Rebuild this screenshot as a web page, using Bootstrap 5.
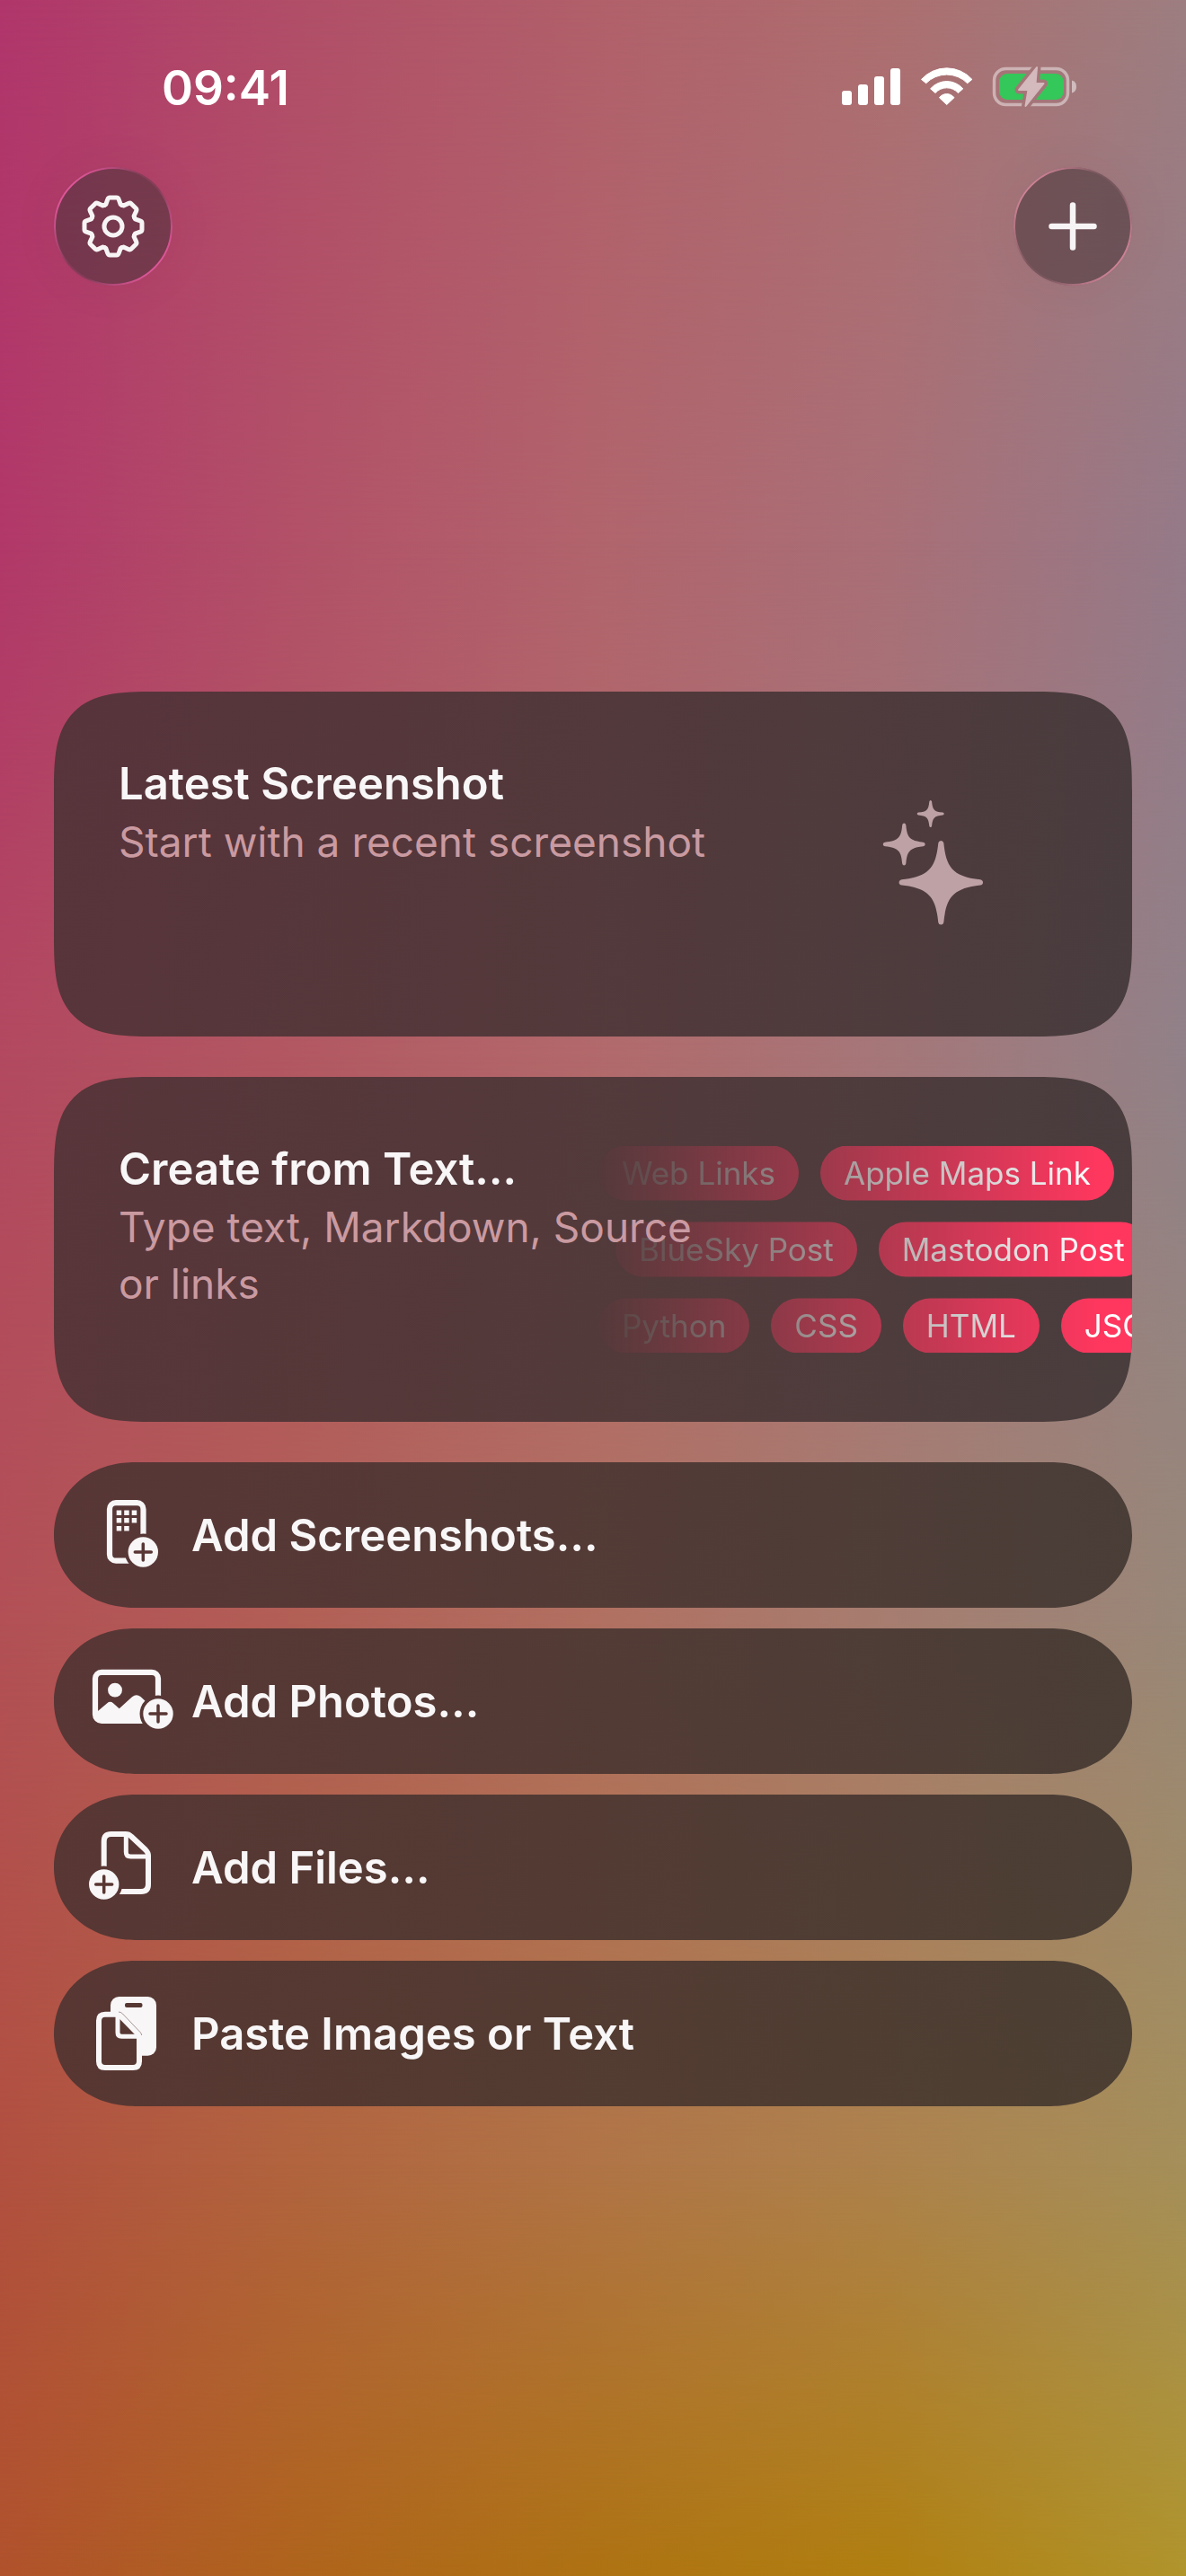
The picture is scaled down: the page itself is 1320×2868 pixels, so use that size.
<!DOCTYPE html>
<html lang="en">
<head>
<meta charset="utf-8">
<meta name="viewport" content="width=device-width, initial-scale=1">
<title>New Project</title>
<link href="https://cdn.jsdelivr.net/npm/bootstrap@5.3.0/dist/css/bootstrap.min.css" rel="stylesheet">
<style>
  body { font-family: Inter, "Liberation Sans", sans-serif; background: #b0606a; color: #f8f6f7; }
  .screen { min-height: 100vh; isolation: isolate; }

  /* Mesh backdrop: one horizontal gradient per band, each fading in over the last */
  .mesh { z-index: -1; }
  .mesh i { position: absolute; inset: 0; background: linear-gradient(90deg, var(--a), var(--b) 25%, var(--c) 50%, var(--d) 75%, var(--e)); }
  .mesh i:nth-child(1) { --a:#b0366b; --b:#b14e68; --c:#b1606a; --d:#ad6f70; --e:#9d7e80; }
  .mesh i:nth-child(2) { --a:#b13869; --b:#b25168; --c:#b1646c; --d:#a96f77; --e:#957a88; -webkit-mask: linear-gradient(transparent 0%, #000 21%); mask: linear-gradient(transparent 0%, #000 21%); }
  .mesh i:nth-child(3) { --a:#b24960; --b:#b25862; --c:#b2696b; --d:#a57779; --e:#918188; -webkit-mask: linear-gradient(transparent 21%, #000 41%); mask: linear-gradient(transparent 21%, #000 41%); }
  .mesh i:nth-child(4) { --a:#b25056; --b:#b25f56; --c:#b17061; --d:#a67d70; --e:#998778; -webkit-mask: linear-gradient(transparent 41%, #000 63%); mask: linear-gradient(transparent 41%, #000 63%); }
  .mesh i:nth-child(5) { --a:#b15040; --b:#b1643e; --c:#b07446; --d:#ad824c; --e:#a58f5a; -webkit-mask: linear-gradient(transparent 63%, #000 84%); mask: linear-gradient(transparent 63%, #000 84%); }
  .mesh i:nth-child(6) { --a:#b0522c; --b:#af641c; --c:#ae7212; --d:#b07f10; --e:#b0942c; -webkit-mask: linear-gradient(transparent 84%, #000 100%); mask: linear-gradient(transparent 84%, #000 100%); }

  .statusbar { padding: 75px 122px 0 180px; height: 119px; }
  .clock { font-size: 53px; font-weight: 600; line-height: 46px; color: #fff; }
  .statusbar svg, .round-btn svg { display: block; overflow: visible; }
  .indicators { gap: 23px; }

  .topbar { padding: 67px 60px 0; }
  .round-btn { width: 132px; height: 132px; background: rgba(66,50,54,.54); box-shadow: 0 0 60px rgba(80,20,40,.05); }

  .stack { padding: 452px 60px 0; gap: 45px; }
  .panel { height: 384px; padding: 70px 72px; border-radius: 76px; color: inherit;
    background: linear-gradient(90deg, rgba(68,48,50,.82), rgba(56,46,47,.82)); }
  .panel-title { font-size: 49px; font-weight: 600; line-height: 66px; }
  .panel-note { font-size: 46px; line-height: 63px; color: #ca9aa1; max-width: 680px; }
  .sparkle { right: 166px; top: 121px; }

  .cloud { gap: 24px; -webkit-mask: linear-gradient(90deg, transparent, #000 94%); mask: linear-gradient(90deg, transparent, #000 94%); }
  .chip { height: 61px; line-height: 61px; padding: 0 26px; font-size: 35px; color: #fff; background: #ff375f; white-space: nowrap; }
  .chip-line { gap: 24px; padding-left: 6px; }
  .chip-line-in { padding-left: 25px; }

  .actions { gap: 23px; }
  .action { height: 162px; padding: 0 72px 0 29px; gap: 20px; font-size: 49px; font-weight: 600; line-height: 63px; border-radius: 81px;
    background: linear-gradient(90deg, rgba(68,48,47,.82), rgba(56,46,41,.82)); color: inherit; }
  @supports (corner-shape: superellipse(1.5)) {
    .panel { border-radius: 112px; corner-shape: superellipse(1.63); }
    .action { border-radius: 90px / 81px; corner-shape: superellipse(1.06); }
  }
</style>
</head>
<body>
<div class="screen position-relative d-flex flex-column">
  <div class="mesh position-absolute top-0 start-0 w-100 h-100" aria-hidden="true"><i></i><i></i><i></i><i></i><i></i><i></i></div>

  <div class="statusbar d-flex justify-content-between">
    <div class="clock">09:41</div>
    <div class="indicators d-flex">
      <svg width="65" height="44" fill="#fff" aria-label="Signal"><rect y="26" width="11" height="16" rx="3"/><rect x="18" y="19" width="11" height="23" rx="3"/><rect x="36" y="10" width="11" height="32" rx="3"/><rect x="54" y="1" width="11" height="41" rx="3"/></svg>
      <svg width="57" height="44" fill="#fff" stroke="#fff" stroke-width="1" stroke-linejoin="round" aria-label="Wi-Fi">
        <path d="M.5 13.4A38 38 0 0 1 56.9 13.4L51.7 17.7A32.3 32.3 0 0 0 5.7 17.7Z"/>
        <path d="M10.6 23.8A24 24 0 0 1 46.8 23.8L41.4 28.5A17 17 0 0 0 16 28.5Z"/>
        <path d="M20.4 33.7A10.4 10.4 0 0 1 37 33.7L28.7 41.5Z"/>
      </svg>
      <svg width="93" height="44" aria-label="Battery charging">
        <defs><mask id="bolt" maskUnits="userSpaceOnUse" x="-5" y="-10" width="105" height="64"><rect x="-5" y="-10" width="105" height="64" fill="#fff"/><path d="M49 0L47.500 18H56.500L36.500 43L39.500 25H29Z" stroke="#000" stroke-width="9" stroke-linejoin="round"/></mask></defs>
        <g mask="url(#bolt)">
          <rect x="1.500" y="1.500" width="82" height="40" rx="13" fill="none" stroke="#fff" stroke-opacity=".45" stroke-width="3.500"/>
          <rect x="7" y="7" width="72" height="29" rx="9" fill="#34c759"/>
        </g>
        <path d="M88 14.500C91.500 15.500 93 18 93 21.500S91.500 27.500 88 28.500Z" fill="#fff" fill-opacity=".5"/>
        <path d="M49 0L47.500 18H56.500L36.500 43L39.500 25H29Z" fill="#d4b9bd" stroke="#d4b9bd" stroke-width="2" stroke-linejoin="round"/>
      </svg>
    </div>
  </div>

  <div class="topbar d-flex justify-content-between">
    <button type="button" class="round-btn btn border-0 rounded-circle p-0" aria-label="Settings">
      <svg width="132" height="132" viewBox="-66 -66 132 132" fill="none" stroke="#f7f4f5">
        <defs>
          <linearGradient id="rimA" x1="0" y1="0.1" x2="1" y2="0.900"><stop offset=".1" stop-color="#e0569a"/><stop offset=".42" stop-color="#e0569a" stop-opacity=".15"/><stop offset=".58" stop-color="#e0569a" stop-opacity=".15"/><stop offset=".9" stop-color="#e0569a"/></linearGradient>
          <path id="tooth" d="M-9.800-23.600L-8.200-24.400L-6.200-30Q-5.500-32-3.800-32H3.800Q5.500-32 6.200-30L8.200-24.400L9.800-23.600"/>
        </defs>
        <circle r="65" stroke="url(#rimA)" stroke-width="2"/>
        <g stroke-width="5" stroke-linejoin="round" stroke-linecap="round">
          <use href="#tooth"/><use href="#tooth" transform="rotate(45)"/><use href="#tooth" transform="rotate(90)"/><use href="#tooth" transform="rotate(135)"/><use href="#tooth" transform="rotate(180)"/><use href="#tooth" transform="rotate(225)"/><use href="#tooth" transform="rotate(270)"/><use href="#tooth" transform="rotate(315)"/>
          <circle r="10"/>
        </g>
      </svg>
    </button>
    <button type="button" class="round-btn btn border-0 rounded-circle p-0" aria-label="Add">
      <svg width="132" height="132" viewBox="-66 -66 132 132" fill="none" stroke="#f7f4f5">
        <defs><linearGradient id="rimB" x1="0" y1="0.1" x2="1" y2="0.900"><stop offset=".1" stop-color="#cf8397"/><stop offset=".42" stop-color="#cf8397" stop-opacity=".1"/><stop offset=".58" stop-color="#cf8397" stop-opacity=".1"/><stop offset=".9" stop-color="#cf8397"/></linearGradient></defs>
        <circle r="65" stroke="url(#rimB)" stroke-width="2"/>
        <path d="M-23.500 0H23.500M0-23.500V23.500" stroke-width="6.500" stroke-linecap="round"/>
      </svg>
    </button>
  </div>

  <main class="stack d-flex flex-column">
    <button type="button" class="panel btn border-0 position-relative overflow-hidden d-flex flex-column align-items-start text-start">
      <span class="panel-title">Latest Screenshot</span>
      <span class="panel-note">Start with a recent screenshot</span>
      <svg class="sparkle position-absolute" width="112" height="140" fill="#bda1a5" aria-hidden="true">
        <path d="M62.300 47.500Q62.800 45 65.300 45T68.300 47.500C71 73 77 85 109 88.300Q112 89 112 91.500T109 94.500C77 98 71 110 68.300 136Q67.800 138.500 65.300 138.500T62.300 136C59.600 110 53.600 98 21.600 94.500Q18.600 94 18.600 91.500T21.600 88.300C53.600 85 59.600 73 62.300 47.500Z"/>
        <path d="M22.200 27.500Q22.600 25.500 24.200 25.500T26.300 27.500C27.500 41 30 45 45.500 46.700Q47.700 47.200 47.700 49T45.500 51.300C30 53 27.500 57 26.300 70.500Q25.800 72.500 24.200 72.500T22.200 70.500C21 57 18.500 53 3 51.300Q.7 50.800.7 49T3 46.700C18.500 45 21 41 22.200 27.500Z"/>
        <path d="M52.300 1.500Q52.600 0 53.700 0T55.100 1.500C56 11 58 12.800 67.300 13.600Q68.700 14 68.700 15T67.300 16.500C58 17.300 56 19.500 55.100 28.500Q54.800 30 53.700 30T52.300 28.500C51.400 19.500 49.400 17.300 40.100 16.500Q38.700 16.200 38.700 15T40.100 13.600C49.400 12.800 51.400 11 52.300 1.500Z"/>
      </svg>
    </button>

    <button type="button" class="panel btn border-0 position-relative overflow-hidden d-flex flex-column align-items-start text-start">
      <span class="cloud position-absolute start-50 end-0 top-50 translate-middle-y d-flex flex-column overflow-hidden">
        <span class="chip-line d-flex"><span class="chip rounded-pill">Web Links</span><span class="chip rounded-pill">Apple Maps Link</span></span>
        <span class="chip-line chip-line-in d-flex"><span class="chip rounded-pill">BlueSky Post</span><span class="chip rounded-pill">Mastodon Post</span></span>
        <span class="chip-line d-flex"><span class="chip rounded-pill">Python</span><span class="chip rounded-pill">CSS</span><span class="chip rounded-pill">HTML</span><span class="chip rounded-pill">JSON</span></span>
      </span>
      <span class="panel-title position-relative">Create from Text…</span>
      <span class="panel-note position-relative">Type text, Markdown, Source or links</span>
    </button>

    <div class="actions d-flex flex-column">
      <button type="button" class="action btn border-0 d-flex align-items-center text-start">
        <svg width="104" height="84" fill="#f8f6f7" aria-hidden="true">
          <defs><mask id="m1"><rect width="104" height="84" fill="#fff"/><circle cx="70.300" cy="61" r="20.500" fill="#000"/></mask></defs>
          <g mask="url(#m1)"><rect x="33" y="6.200" width="37.500" height="64.500" rx="7" fill="none" stroke="#f8f6f7" stroke-width="6.200"/>
          <path d="M40.700 14.500h5.500v5.500h-5.500zM49.200 14.500h5.500v5.500h-5.500zM57.700 14.500h5.500v5.500h-5.500zM40.700 23h5.500v5.500h-5.500zM49.200 23h5.500v5.500h-5.500zM57.700 23h5.500v5.500h-5.500zM40.700 32h5.500v5.500h-5.500zM49.200 32h5.500v5.500h-5.500z"/></g>
          <circle cx="70.300" cy="61" r="16.700"/><path d="M61.300 61h18M70.300 52v18" stroke="#583635" stroke-width="3.500" stroke-linecap="round"/>
        </svg>
        <span>Add Screenshots…</span>
      </button>
      <button type="button" class="action btn border-0 d-flex align-items-center text-start">
        <svg width="104" height="84" fill="#f8f6f7" aria-hidden="true">
          <defs><mask id="m2"><rect width="104" height="84" fill="#fff"/><circle cx="87" cy="56" r="20.500" fill="#000"/></mask></defs>
          <g mask="url(#m2)"><rect x="17" y="9.800" width="70" height="54" rx="7" fill="none" stroke="#f8f6f7" stroke-width="6.200"/>
          <circle cx="39" cy="29.700" r="7.900"/>
          <path d="M17 55.500L30.300 44.200Q33.700 41.500 37 44.300L43.700 50.300L58 37.300Q62.700 33.500 67.500 37L88 56V64H17Z"/></g>
          <circle cx="87" cy="56" r="16.700"/><path d="M78 56h18M87 47v18" stroke="#583634" stroke-width="3.500" stroke-linecap="round"/>
        </svg>
        <span>Add Photos…</span>
      </button>
      <button type="button" class="action btn border-0 d-flex align-items-center text-start">
        <svg width="104" height="84" fill="#f8f6f7" aria-hidden="true">
          <defs><mask id="m3"><rect width="104" height="84" fill="#fff"/><circle cx="26.700" cy="61" r="20.500" fill="#000"/></mask></defs>
          <g mask="url(#m3)" fill="none" stroke="#f8f6f7" stroke-width="6"><path d="M26.700 60V13Q26.700 5 34.700 5H51Q54.500 5 57 7.500L73 22.500Q76 25.500 76 29V61Q76 69 68 69H30"/>
          <path d="M51.300 5V25Q51.300 30 56.300 30H76" stroke-width="5"/></g>
          <circle cx="26.700" cy="61" r="16.700"/><path d="M17.700 61h18M26.700 52v18" stroke="#583631" stroke-width="3.500" stroke-linecap="round"/>
        </svg>
        <span>Add Files…</span>
      </button>
      <button type="button" class="action btn border-0 d-flex align-items-center text-start">
        <svg width="104" height="84" fill="#f8f6f7" aria-hidden="true">
          <defs><mask id="m4"><rect width="104" height="84" fill="#fff"/><path d="M21 74V21H44L66 43V80H21Z" fill="#000"/><rect x="50" y="8" width="19.500" height="5" rx="2" fill="#000"/></mask></defs>
          <rect x="34" y="1" width="51" height="65.700" rx="9.500" mask="url(#m4)"/>
          <g fill="none" stroke="#f8f6f7" stroke-width="6"><path d="M42 20.700H28Q21 20.700 21 27.700V73Q21 80 28 80H59Q66 80 66 73V44L44 21.500Z" stroke-linejoin="round"/>
          <path d="M42 22V41Q42 45.300 46.300 45.300H66" stroke-width="5"/></g>
          <path d="M43 18Q45.500 18 47.500 20L67 40.500Q68.500 42 68.700 44" fill="none" stroke="#583630" stroke-width=".5"/>
        </svg>
        <span>Paste Images or Text</span>
      </button>
    </div>
  </main>
</div>
<script src="https://cdn.jsdelivr.net/npm/bootstrap@5.3.0/dist/js/bootstrap.bundle.min.js"></script>
</body>
</html>
